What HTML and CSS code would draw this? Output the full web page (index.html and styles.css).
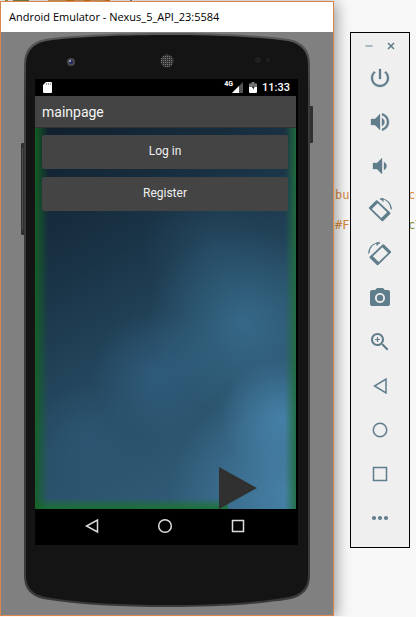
FILE: index.html
```html
<!DOCTYPE html>
<html lang="en">
<head>
<meta charset="utf-8">
<meta name="viewport" content="width=device-width, initial-scale=1">
<title>Android Emulator</title>
<link rel="stylesheet" href="styles.css">
</head>
<body>
<div class="editor" aria-hidden="true">
  <div class="code-line line-a"><span>bu</span><span>co</span></div>
  <div class="code-line line-b"><span>#F</span><span class="olive">cT</span></div>
</div>
<main class="desktop">
  <section class="window">
    <header class="titlebar">Android Emulator - Nexus_5_API_23:5584</header>
    <div class="stage">
      <div class="phone">
        <svg class="shell" viewBox="0 0 292 576" preserveAspectRatio="none" aria-hidden="true">
          <defs>
            <linearGradient id="rim" x1="0" y1="0" x2="0" y2="1">
              <stop offset="0" stop-color="#5a5a5a"/><stop offset=".1" stop-color="#3c3c3c"/><stop offset="1" stop-color="#3a3a3a"/>
            </linearGradient>
            <pattern id="mesh" width="2" height="2" patternUnits="userSpaceOnUse">
              <rect width="2" height="2" fill="#343434"/><rect width="1" height="1" fill="#777"/>
            </pattern>
          </defs>
          <rect x="0" y="111" width="4" height="92" rx="1" fill="#303030"/>
          <rect x="1" y="116" width="1" height="82" fill="#4c4c4c"/>
          <rect x="288" y="74" width="4" height="37" rx="1" fill="#303030"/>
          <path fill="url(#rim)" d="M3 32C3 17 11 10 24 7C60 2 110 1 146 1C182 1 232 2 268 7C281 10 289 17 289 32V544C289 557 282 564 270 567C235 573 190 575 146 575C102 575 57 573 22 567C10 564 3 557 3 544Z"/>
          <path fill="#141414" d="M5 33C5 19 12 12 25 9C60 4 110 3 146 3C182 3 232 4 267 9C280 12 287 19 287 33V543C287 556 280 562 268 565C235 571 190 573 146 573C102 573 57 571 24 565C12 562 5 556 5 543Z"/>
          <circle cx="50" cy="30" r="4" fill="#484848"/><circle cx="50" cy="30" r="2" fill="#25256c"/><circle cx="49" cy="29" r="1" fill="#bbc"/>
          <circle cx="146" cy="29" r="6.500" fill="url(#mesh)"/>
          <circle cx="237" cy="28" r="3" fill="#202020"/><circle cx="247" cy="28" r="2" fill="#202020"/>
        </svg>
        <div class="screen">
          <div class="display">
            <div class="statusbar">
              <svg class="sd" width="9" height="11" viewBox="0 0 9 11" aria-hidden="true"><path fill="#fff" d="M3 0H8Q9 0 9 1V10Q9 11 8 11H1Q0 11 0 10V3Z"/><path stroke="#000" d="M3.500 1V3M5.500 1V3M7.500 1V3" stroke-width=".4"/></svg>
              <span class="net">4G</span>
              <svg class="signal" width="11" height="11" viewBox="0 0 11 11" aria-hidden="true"><path fill="#555" d="M11 0V11H0Z"/><path fill="#fff" d="M7 4V11H0Z"/></svg>
              <svg class="battery" width="8" height="11" viewBox="0 0 8 11" aria-hidden="true"><path fill="#777" d="M2.500 0H5.500V1.500H8V5H0V1.500H2.500Z"/><path fill="#fff" d="M0 5H8V10Q8 11 7 11H1Q0 11 0 10Z"/><path fill="#222" d="M4.500 3 3 6H4V8L5.500 5H4.500Z"/></svg>
              <time>11:33</time>
            </div>
            <h1 class="appbar">mainpage</h1>
            <div class="content">
              <button type="button" class="action">Log in</button>
              <button type="button" class="action">Register</button>
              <button type="button" class="play" aria-label="Play"><svg width="38" height="42" viewBox="0 0 38 42"><path fill="#303030" d="M0 0 38 21 0 42Z"/></svg></button>
            </div>
          </div>
          <nav class="navbar">
            <button type="button" aria-label="Back"><svg width="16" height="16" viewBox="0 0 16 16"><path d="M13.500 2V14L2.500 8Z"/></svg></button>
            <button type="button" aria-label="Home"><svg width="16" height="16" viewBox="0 0 16 16"><circle cx="8" cy="8" r="6.300"/></svg></button>
            <button type="button" aria-label="Overview"><svg width="16" height="16" viewBox="0 0 16 16"><path d="M2.500 2.500H13.500V13.500H2.500Z"/></svg></button>
          </nav>
        </div>
      </div>
    </div>
  </section>
  <aside class="toolbar">
    <div class="controls">
      <button type="button" aria-label="Minimize"><svg width="8" height="8" viewBox="0 0 8 8"><path d="M.5 4H7.500" stroke="#a0b1ba" stroke-width="1.800"/></svg></button>
      <button type="button" aria-label="Close"><svg width="8" height="8" viewBox="0 0 8 8"><path d="M1 1 7 7M7 1 1 7" stroke="#607d8b" stroke-width="1.600"/></svg></button>
    </div>
    <button type="button" class="tool" aria-label="Power"><svg viewBox="0 0 24 24"><path class="bold" d="M13 3h-2v10h2V3zm4.830 2.170-1.420 1.420C17.990 7.860 19 9.810 19 12c0 3.870-3.130 7-7 7s-7-3.130-7-7c0-2.190 1.010-4.140 2.580-5.420L6.170 5.170C4.230 6.820 3 9.260 3 12c0 4.970 4.030 9 9 9s9-4.030 9-9c0-2.740-1.230-5.180-3.170-6.830z"/></svg></button>
    <button type="button" class="tool" aria-label="Volume up"><svg viewBox="0 0 24 24"><path class="bold" d="M3 9v6h4l5 5V4L7 9H3zm13.500 3c0-1.770-1.020-3.290-2.500-4.030v8.050c1.480-.73 2.500-2.250 2.500-4.020zM14 3.230v2.060c2.890.86 5 3.540 5 6.710s-2.110 5.850-5 6.710v2.060c4.010-.91 7-4.490 7-8.770s-2.990-7.860-7-8.770z"/></svg></button>
    <button type="button" class="tool" aria-label="Volume down"><svg viewBox="0 0 24 24"><path class="bold" d="M18.500 12c0-1.770-1.020-3.290-2.500-4.030v8.050c1.480-.73 2.500-2.250 2.500-4.020zM5 9v6h4l5 5V4L9 9H5z"/></svg></button>
    <button type="button" class="tool" aria-label="Rotate left"><svg viewBox="0 0 24 24"><g id="rotate"><path class="fill" fill-rule="evenodd" d="M1.200 9.300 8 2.500Q8.700 1.900 9.400 2.600L22.200 14.600Q22.900 15.300 22.200 16L15.100 23Q14.400 23.600 13.700 23L1.200 10.700Q.5 10 1.200 9.300ZM3.900 11 13.300 20.100 19.100 14.300 9.700 5.200Z"/><path class="thin" d="M12 1.100C18.500 .3 23 5 23.300 11.500"/><path class="fill" d="M12 .6 15.500 0V4.300Z"/></g></svg></button>
    <button type="button" class="tool" aria-label="Rotate right"><svg viewBox="0 0 24 24"><use href="#rotate" transform="translate(24 0) scale(-1 1)"/></svg></button>
    <button type="button" class="tool" aria-label="Take screenshot"><svg viewBox="0 0 24 24"><circle class="fill" cx="12" cy="12" r="3.200"/><path class="fill" d="M9 2 7.170 4H4c-1.100 0-2 .9-2 2v12c0 1.100.9 2 2 2h16c1.100 0 2-.9 2-2V6c0-1.100-.9-2-2-2h-3.170L15 2H9zm3 15c-2.760 0-5-2.240-5-5s2.240-5 5-5 5 2.240 5 5-2.240 5-5 5z"/></svg></button>
    <button type="button" class="tool" aria-label="Zoom"><svg viewBox="0 0 24 24"><path class="fill" d="M15.500 14h-.79l-.28-.27C15.410 12.590 16 11.110 16 9.500 16 5.910 13.090 3 9.500 3S3 5.910 3 9.500 5.910 16 9.500 16c1.610 0 3.090-.59 4.230-1.570l.27.28v.79l5 4.990L20.490 19l-4.990-5zm-6 0C7.010 14 5 11.990 5 9.500S7.010 5 9.500 5 14 7.010 14 9.500 11.990 14 9.500 14z"/><path class="thin" d="M9.500 7V12M7 9.500H12"/></svg></button>
    <button type="button" class="tool" aria-label="Back"><svg viewBox="0 0 24 24"><path class="line" d="M18 5V19L6.500 12Z"/></svg></button>
    <button type="button" class="tool" aria-label="Home"><svg viewBox="0 0 24 24"><circle class="line" cx="12" cy="12" r="6.700"/></svg></button>
    <button type="button" class="tool" aria-label="Overview"><svg viewBox="0 0 24 24"><path class="line" d="M5.500 5.500H18.500V18.500H5.500Z"/></svg></button>
    <button type="button" class="tool" aria-label="More"><svg viewBox="0 0 24 24"><g class="fill"><circle cx="6" cy="12" r="2.100"/><circle cx="12" cy="12" r="2.100"/><circle cx="18" cy="12" r="2.100"/></g></svg></button>
  </aside>
</main>
</body>
</html>
```
FILE: styles.css
```css
* { box-sizing: border-box; }
body {
  margin: 0;
  background: #f8f8f8;
  font-family: Roboto, sans-serif;
  overflow: hidden;
}
button {
  padding: 0;
  border: 0;
  background: none;
  font: inherit;
  color: inherit;
}
svg { display: block; }

.editor {
  position: absolute;
  inset: 0;
  overflow: hidden;
  font: 12px/16px "DejaVu Sans Mono", monospace;
  color: #d98a3c;
  background:
    linear-gradient(90deg, transparent 5px, #9a9a50 5px 8px, transparent 8px 13px, #7c8a50 13px 29px, transparent 29px 48px, #d9a060 48px 66px, #cf7a1a 66px 74px, #d9a060 74px 84px, #cf7a1a 84px 90px, #d9a060 90px 105px, #cf7a1a 105px 110px, transparent 110px 130px, #7a80b0 130px 132px, transparent 132px) 0 0 / 100% 1px no-repeat;
}
.code-line {
  position: absolute;
  right: 0;
  width: 81px;
  display: flex;
  justify-content: space-between;
  white-space: nowrap;
}
.code-line span:last-child { width: 8px; }
.line-a { top: 187px; }
.line-b { top: 217px; }
.olive { color: #7c8a28; }

.desktop {
  position: relative;
  display: flex;
  align-items: flex-start;
  gap: 16px;
  padding: 1px 6px 0 0;
}
.window {
  flex: 1;
  border: 1px solid #d9874f;
  background: #808080;
  box-shadow: 2px 2px 14px rgba(0, 0, 0, .42);
}
.titlebar {
  height: 30px;
  padding-left: 8px;
  background: #fff;
  font: 11px/30px "Open Sans", sans-serif;
  color: #000;
  white-space: nowrap;
}
.stage { padding: 0 20px 7px; }
.phone {
  position: relative;
  padding: 47px 15px 63px 14px;
}
.shell {
  position: absolute;
  inset: 0;
  width: 100%;
  height: 100%;
}
.screen {
  position: relative;
  background: #000;
}
.display { margin-right: 2px; }
.statusbar {
  display: flex;
  align-items: center;
  height: 17px;
  padding: 0 6px 0 8px;
  color: #fff;
  font-size: 11px;
  font-weight: 500;
}
.net {
  align-self: flex-start;
  margin-left: auto;
  font-size: 7px;
  font-weight: 700;
  line-height: 11px;
}
.signal { margin-left: -1px; }
.battery { margin: 0 5px 0 6px; }
.appbar {
  margin: 0;
  height: 32px;
  padding-left: 7px;
  background: #444;
  border-bottom: 1px solid #333;
  color: #f4f4f4;
  font-size: 14px;
  font-weight: 400;
  line-height: 32px;
}
.content {
  display: flex;
  flex-direction: column;
  gap: 8px;
  height: 381px;
  padding: 7px 8px 0 7px;
  background:
    linear-gradient(90deg, rgba(20, 100, 35, .9), rgba(20, 100, 35, 0) 13px),
    linear-gradient(270deg, rgba(32, 110, 60, .9), rgba(32, 110, 60, 0) 11px),
    linear-gradient(0deg, rgba(25, 115, 45, .9), rgba(25, 115, 45, 0) 11px) left / 74% 100% no-repeat,
    radial-gradient(circle at 94% 76%, rgba(75, 138, 180, .7), transparent 60px),
    radial-gradient(circle at 80% 51%, rgba(61, 120, 155, .65), transparent 95px),
    radial-gradient(circle at 47% 65%, rgba(52, 101, 138, .6), transparent 65px),
    radial-gradient(circle at 20% 82%, rgba(46, 91, 122, .5), transparent 55px),
    radial-gradient(circle at 98% 96%, rgba(72, 132, 170, .9), transparent 120px),
    radial-gradient(circle at 68% 32%, rgba(40, 78, 103, .6), transparent 70px),
    linear-gradient(150deg, #101f2c 0%, #1a3447 32%, #284e66 62%, #356280 100%);
}
.action {
  height: 34px;
  border-radius: 2px;
  background: #444;
  color: #f0f0f0;
  font-size: 12px;
  line-height: 32px;
  padding-bottom: 2px;
}
.play {
  align-self: flex-end;
  margin: auto 31px 0 0;
}
.navbar {
  display: flex;
  justify-content: space-between;
  align-items: center;
  height: 36px;
  padding: 0 52px 2px 49px;
}
.navbar svg {
  fill: none;
  stroke: #ddd;
  stroke-width: 1.500;
}

.toolbar {
  flex: none;
  width: 60px;
  margin-top: 31px;
  padding-bottom: 7px;
  border: 1px solid #000;
  background: #efefef;
  display: flex;
  flex-direction: column;
  align-items: center;
}
.controls {
  display: flex;
  align-items: center;
  gap: 14px;
  height: 23px;
  padding-top: 2px;
}
.tool {
  width: 100%;
  height: 44px;
}
.tool svg {
  width: 24px;
  height: 24px;
  margin: auto;
}
.fill, .bold { fill: #607d8b; }
.bold {
  stroke: #607d8b;
  stroke-width: .3;
}
.line {
  fill: none;
  stroke: #607d8b;
  stroke-width: 1.500;
}
.thin {
  fill: none;
  stroke: #607d8b;
  stroke-width: 1.200;
}
```
